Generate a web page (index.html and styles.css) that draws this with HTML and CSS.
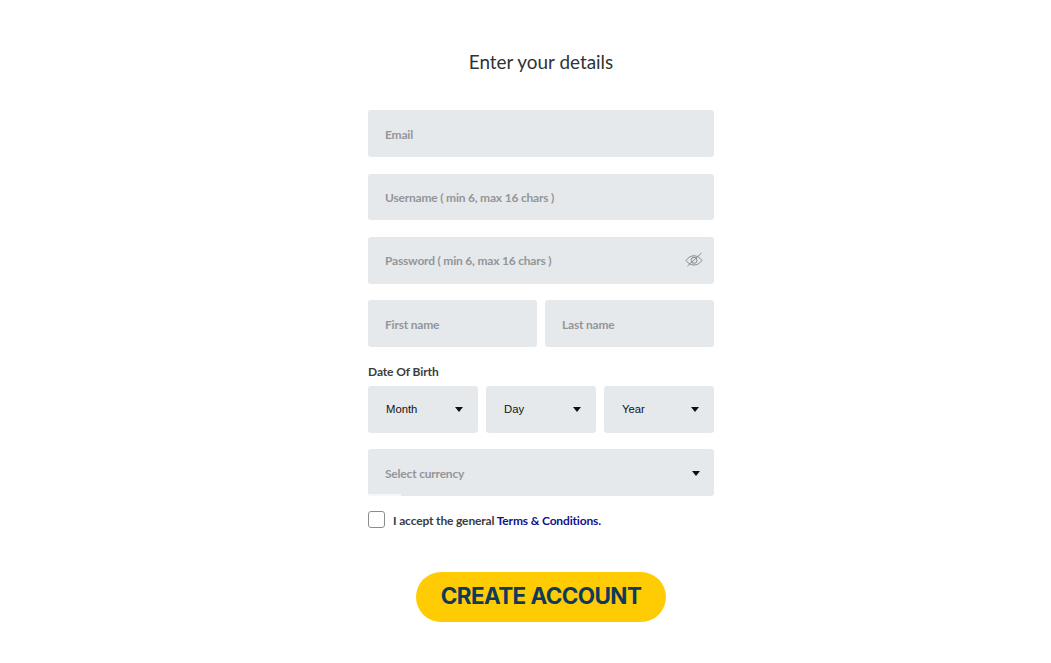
FILE: index.html
```html
<!DOCTYPE html>
<html lang="en">
<head>
<meta charset="utf-8">
<title>Enter your details</title>
<link rel="stylesheet" href="styles.css">
</head>
<body>
<main class="form">
  <h1 class="title">Enter your details</h1>
  <div class="field"><span class="placeholder">Email</span></div>
  <div class="field"><span class="placeholder">Username ( min 6, max 16 chars )</span></div>
  <div class="field">
    <span class="placeholder">Password ( min 6, max 16 chars )</span>
    <svg class="eye" viewBox="0 0 18 16" width="18" height="16" aria-hidden="true">
      <path d="M1 8.500C3.200 5.400 5.900 3.800 9 3.800s5.800 1.600 8 4.700c-2.200 3-4.900 4.500-8 4.500S3.200 11.500 1 8.500z"/>
      <circle cx="9" cy="8.300" r="3"/>
      <path d="M2.500 14 16.500 1"/>
    </svg>
  </div>
  <div class="row">
    <div class="field"><span class="placeholder">First name</span></div>
    <div class="field"><span class="placeholder">Last name</span></div>
  </div>
  <div class="label">Date Of Birth</div>
  <div class="row">
    <div class="field select"><span class="value">Month</span><i class="caret"></i></div>
    <div class="field select"><span class="value">Day</span><i class="caret"></i></div>
    <div class="field select"><span class="value">Year</span><i class="caret"></i></div>
  </div>
  <div class="field currency"><span class="placeholder">Select currency</span><i class="caret"></i></div>
  <div class="terms">
    <span class="checkbox"></span>
    <span class="terms-text">I accept the general <a href="#">Terms &amp; Conditions.</a></span>
  </div>
  <button class="submit" type="button">CREATE ACCOUNT</button>
</main>
</body>
</html>
```
FILE: styles.css
```css
* { box-sizing: border-box; }
html, body { margin: 0; padding: 0; }
body {
  background: #fff;
  font-family: "Lato", "Liberation Sans", sans-serif;
  height: 663px;
  overflow: hidden;
}
.form {
  width: 346px;
  margin: 0 0 0 368px;
  padding-top: 50px;
  display: flex;
  flex-direction: column;
}
.title {
  margin: 0 0 36.300px;
  height: 24px;
  line-height: 23px;
  font-size: 18.900px;
  font-weight: 400;
  color: #2f3336;
  text-align: center;
}
.field {
  height: 46.670px;
  margin-bottom: 16.670px;
  background: #e6e9eb;
  border-radius: 3px;
  padding: 0.900px 17px 0;
  display: flex;
  align-items: center;
  justify-content: space-between;
}
.placeholder {
  font-size: 12px;
  font-weight: 700;
  letter-spacing: -0.200px;
  color: #92969a;
  white-space: nowrap;
}
.eye {
  margin-right: -6px;
  margin-top: -1px;
  fill: none;
  stroke: #85898c;
  stroke-width: 1;
}
.row {
  display: flex;
  gap: 8px;
}
.row .field { flex: 1 1 0; }
.label {
  height: 14px;
  line-height: 14px;
  margin: 1.400px 0 7px;
  font-size: 12px;
  letter-spacing: -0.100px;
  font-weight: 700;
  color: #3a3d40;
}
.select { padding: 0 15px 0 18px; }
.value {
  font-family: "Liberation Sans", Arial, sans-serif;
  font-size: 11.300px;
  color: #111;
}
.caret {
  width: 0;
  height: 0;
  border-left: 4.750px solid transparent;
  border-right: 4.750px solid transparent;
  border-top: 5px solid #111;
}
.currency {
  padding: 1px 14.500px 0 17px;
  margin-bottom: 15px;
  position: relative;
}
.currency::after {
  content: "";
  position: absolute;
  left: 0;
  bottom: 0;
  width: 33px;
  height: 2px;
  background: rgba(255, 255, 255, 0.6);
}
.terms {
  display: flex;
  align-items: center;
  gap: 8px;
  height: 17px;
  margin-bottom: 44px;
}
.checkbox {
  width: 17px;
  height: 17px;
  border: 1px solid #8a8d90;
  border-radius: 3px;
  background: #fff;
}
.terms-text {
  padding-top: 2px;
  font-size: 12px;
  letter-spacing: -0.150px;
  font-weight: 700;
  color: #3a3d40;
}
.terms-text a {
  color: #12128c;
  text-decoration: none;
}
.submit {
  align-self: center;
  width: 250px;
  height: 50px;
  border: 0;
  border-radius: 25px;
  background: #ffcc03;
  color: #0f3a5c;
  font-family: "Inter", "Liberation Sans", sans-serif;
  font-size: 22.500px;
  font-weight: 700;
  letter-spacing: -0.600px;
  padding: 0 0 2px;
}
```
